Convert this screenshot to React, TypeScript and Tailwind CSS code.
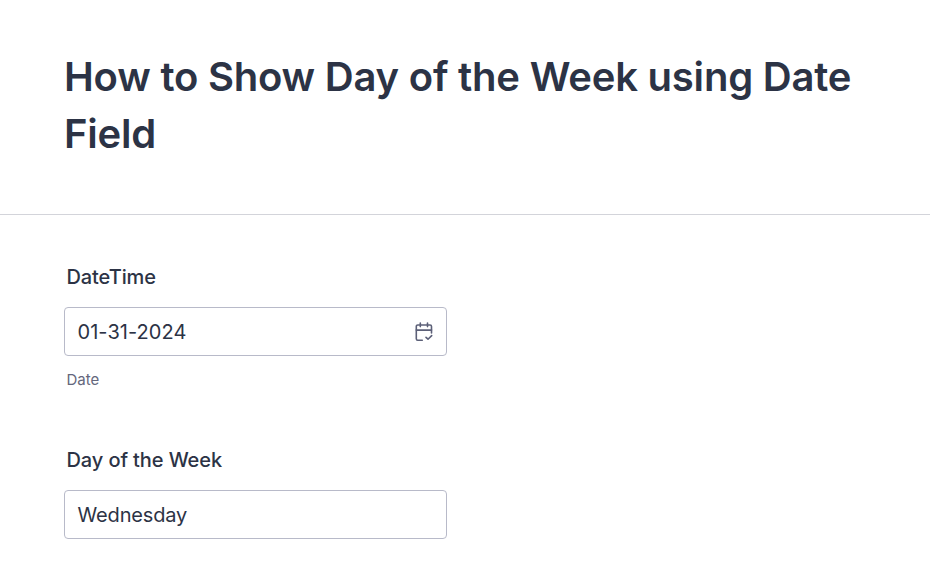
import type { ReactNode } from 'react';

function CalendarIcon() {
  return (
    <svg
      className="h-5 w-5 shrink-0 text-[#5c6078]"
      viewBox="0 0 20 20"
      fill="none"
      stroke="currentColor"
      strokeWidth="1.6"
      strokeLinecap="round"
      strokeLinejoin="round"
      aria-hidden="true"
    >
      <path d="M8.3 18.2H3.7A1.4 1.4 0 0 1 2.3 16.8V4.4A1.4 1.4 0 0 1 3.7 3h12.4a1.4 1.4 0 0 1 1.4 1.4V11" />
      <path d="M2.3 8.1h15.2M6.3 1v3.6M13.5 1v3.6M12 15.3l2 1.9 3.7-3.6" />
    </svg>
  );
}

interface FieldProps {
  label: string;
  value: string;
  hint?: string;
  icon?: ReactNode;
}

function Field({ label, value, hint, icon }: FieldProps) {
  return (
    <div className="w-[383px]">
      <div className="pl-[2.5px] text-[20px] leading-6 font-medium tracking-[-0.1px]">{label}</div>
      <div className="mt-[18px] flex h-[49px] items-center justify-between rounded-[4px] border border-[#b8bac9] pr-3 pl-[12.5px] text-[20px]">
        <span className={icon ? 'tracking-[0.05px]' : 'tracking-[-0.15px]'}>{value}</span>
        {icon}
      </div>
      {hint && <div className="mt-[14px] pl-[2.5px] text-[15px] leading-5 text-[#64677c]">{hint}</div>}
    </div>
  );
}

export default function App() {
  return (
    <main className="h-[569px] overflow-hidden bg-white font-['Inter',sans-serif] text-[#2c3345]">
      <header className="h-[215px] border-b border-[#d3d4da] px-16 pt-12">
        <h1 className="text-[40px] leading-[57px] font-semibold tracking-[-0.21px]">
          How to Show Day of the Week using Date Field
        </h1>
      </header>
      <div className="flex flex-col gap-[58px] px-16 pt-[50px]">
        <Field label="DateTime" value="01-31-2024" hint="Date" icon={<CalendarIcon />} />
        <Field label="Day of the Week" value="Wednesday" />
      </div>
    </main>
  );
}
